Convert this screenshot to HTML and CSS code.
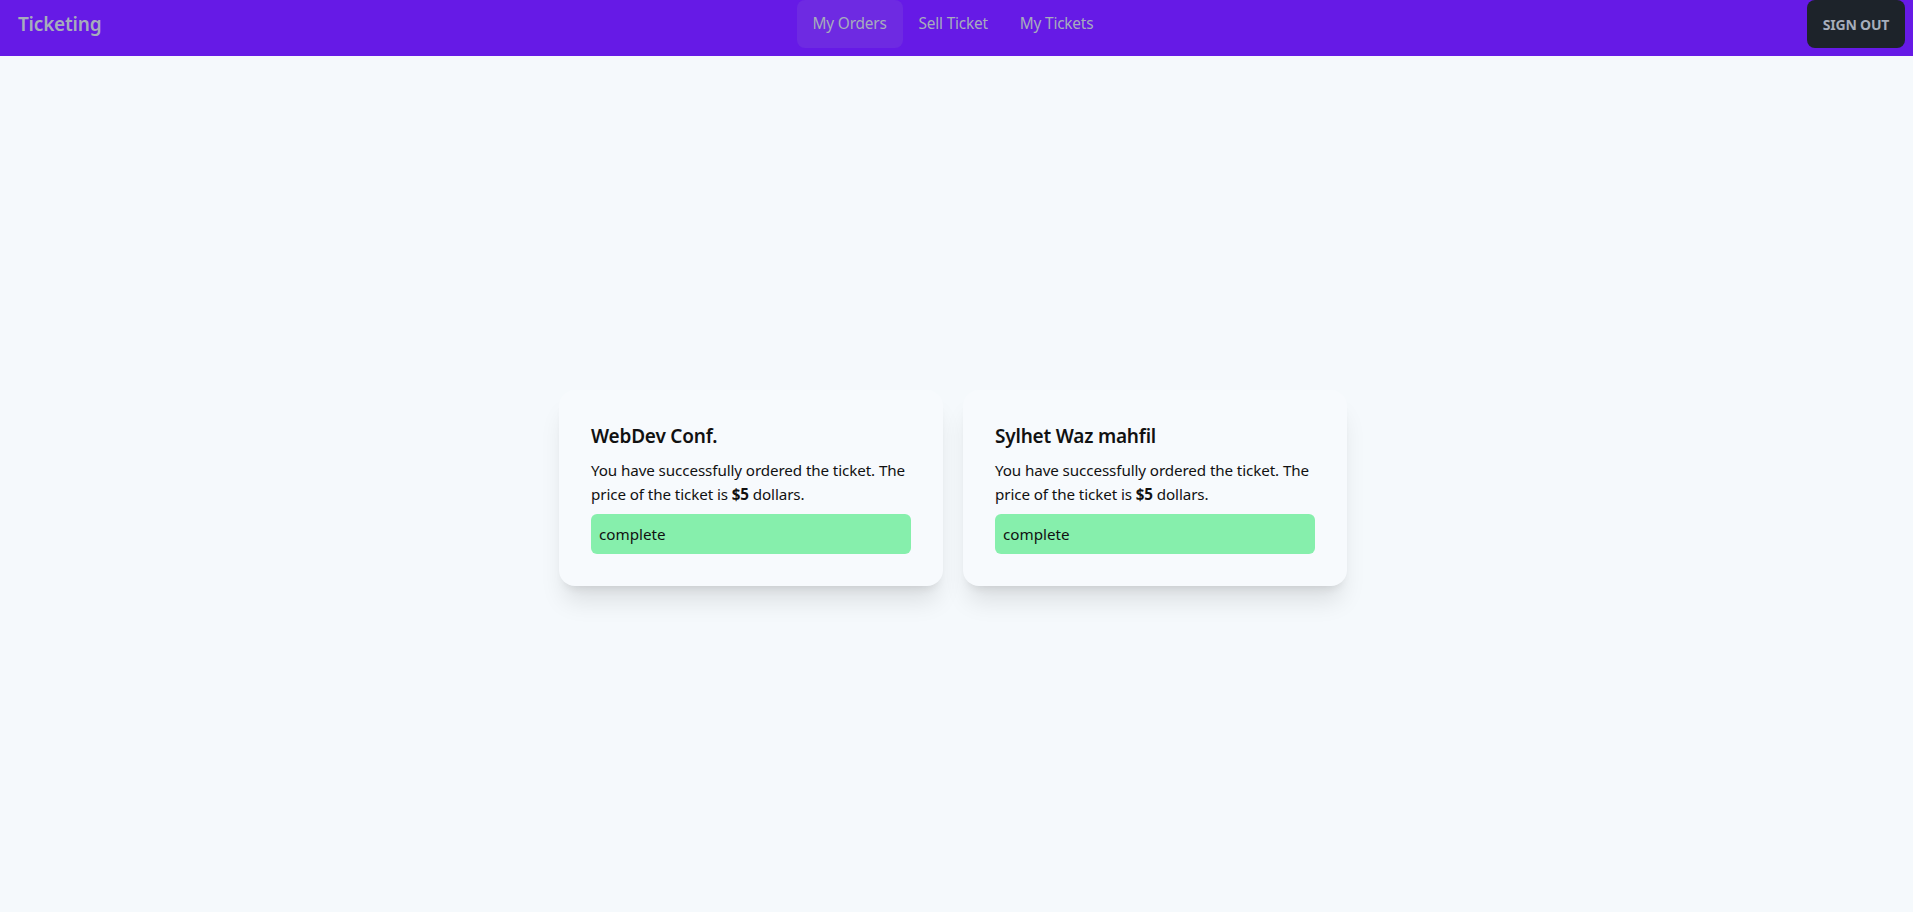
FILE: index.html
```html
<!DOCTYPE html>
<html lang="en">
<head>
<meta charset="utf-8">
<title>Ticketing</title>
<link rel="stylesheet" href="styles.css">
</head>
<body>
<header class="navbar">
  <div class="nav-start"><a class="brand" href="#">Ticketing</a></div>
  <nav class="nav-center">
    <a class="nav-item active" href="#">My Orders</a>
    <a class="nav-item" href="#">Sell Ticket</a>
    <a class="nav-item" href="#">My Tickets</a>
  </nav>
  <div class="nav-end"><button class="signout">SIGN OUT</button></div>
</header>
<main class="main">
  <div class="cards">
    <div class="card">
      <h2 class="card-title">WebDev Conf.</h2>
      <p class="card-text">You have successfully ordered the ticket. The price of the ticket is <b>$5</b> dollars.</p>
      <div class="status">complete</div>
    </div>
    <div class="card">
      <h2 class="card-title">Sylhet Waz mahfil</h2>
      <p class="card-text">You have successfully ordered the ticket. The price of the ticket is <b>$5</b> dollars.</p>
      <div class="status">complete</div>
    </div>
  </div>
</main>
</body>
</html>
```
FILE: styles.css
```css
* { box-sizing: border-box; }
html, body { margin: 0; padding: 0; }
body {
  font-family: "Noto Sans", "Open Sans", sans-serif;
  background: #f5f9fc;
  color: #111;
  min-height: 912px;
}
.navbar {
  height: 56px;
  background: #661ae6;
  display: grid;
  grid-template-columns: 1fr auto 1fr;
  align-items: start;
  padding: 0 8px;
}
.nav-start { display: flex; }
.brand {
  display: block;
  padding: 0 10px;
  height: 48px;
  line-height: 48px;
  font-size: 19px;
  font-weight: 600;
  color: #a6adbb;
  text-decoration: none;
  letter-spacing: -0.2px;
}
.nav-center {
  display: flex;
  margin-right: 7px;
}
.nav-item {
  display: block;
  height: 48px;
  line-height: 48px;
  padding: 0 16px;
  font-size: 15.4px;
  color: #a6adbb;
  text-decoration: none;
  border-radius: 8px;
  letter-spacing: -0.2px;
}
.nav-item.active { background: #6e2ae2; }
.nav-end { display: flex; justify-content: flex-end; }
.signout {
  height: 48px;
  width: 98px;
  border: none;
  border-radius: 8px;
  background: #1d232a;
  color: #a6adbb;
  font-family: inherit;
  font-size: 14px;
  font-weight: 700;
  letter-spacing: -0.2px;
}
.main {
  padding-top: 334px;
}
.cards {
  display: flex;
  justify-content: center;
  gap: 20px;
  padding-right: 7px;
}
.card {
  width: 384px;
  padding: 32px;
  background: #f7fafd;
  border-radius: 16px;
  box-shadow: 0 20px 25px -5px rgba(0,0,0,.1), 0 8px 10px -6px rgba(0,0,0,.1);
  display: flex;
  flex-direction: column;
  gap: 8px;
}
.card-title {
  margin: 0;
  font-size: 19px;
  line-height: 28px;
  font-weight: 600;
  letter-spacing: -0.2px;
}
.card-text {
  margin: 0;
  font-size: 15.2px;
  line-height: 24px;
  letter-spacing: -0.1px;
}
.card-text b { font-weight: 700; }
.status {
  background: #86efac;
  border-radius: 6px;
  padding: 8px;
  font-size: 15.2px;
  line-height: 24px;
}
```
